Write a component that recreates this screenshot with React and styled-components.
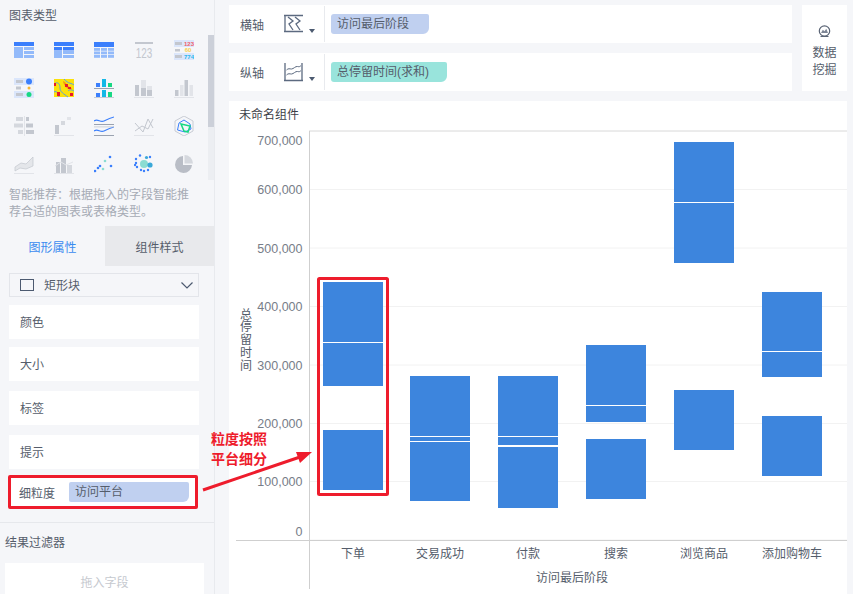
import React from 'react'
import styled, { createGlobalStyle } from 'styled-components'

const GlobalStyle = createGlobalStyle`
  html, body {
    margin: 0;
    padding: 0;
    background: #f5f6f9;
    font-family: "Liberation Sans", "Noto Sans CJK SC", sans-serif;
    font-size: 12px;
    color: #555d6b;
  }
`
const Page = styled.div`
  position: relative;
  width: 853px;
  height: 594px;
  display: flex;
  overflow: hidden;
  background: #f5f6f9;
`
const Sidebar = styled.aside`
  width: 214px;
  flex: none;
  display: flex;
  flex-direction: column;
  border-right: 1px solid #e8eaee;
`
const TypeSection = styled.section`
  position: relative;
  height: 226px;
  flex: none;
  box-sizing: border-box;
  padding: 9px 0 0 9px;
`
const SideTitle = styled.div`
  line-height: 14px;
`
const TypeGrid = styled.div`
  display: grid;
  grid-template-columns: repeat(5, 40px);
  grid-auto-rows: 38px;
  justify-items: center;
  align-items: center;
  margin: 8px 0 0 -5px;
  width: 200px;
`
const Hint = styled.p`
  margin: 4px 0 0;
  width: 190px;
  line-height: 17px;
  color: #a6abb5;
`
const ScrollTrack = styled.div`
  position: absolute;
  top: 35px;
  right: 0;
  width: 6px;
  height: 145px;
  background: #eceef2;
`
const ScrollThumb = styled.div`
  height: 92px;
  background: #ccd0d9;
`
const Tabs = styled.div`
  display: flex;
  height: 40px;
  flex: none;
`
const Tab = styled.div`
  width: ${p => (p.$active ? '105px' : '109px')};
  display: flex;
  align-items: center;
  justify-content: center;
  background: ${p => (p.$active ? '#f5f6f9' : '#e8e9ec')};
  color: ${p => (p.$active ? '#3b8bf0' : '#555d6b')};
`
const PropSection = styled.div`
  padding: 7px 15px 0 9px;
  display: flex;
  flex-direction: column;
`
const Select = styled.div`
  height: 20px;
  border: 1px solid #e3e5ea;
  display: flex;
  align-items: center;
  padding: 0 5px 2px 10px;
  gap: 10px;
  margin-bottom: 8px;
`
const SelectBox = styled.span`
  width: 12px;
  height: 10px;
  border: 1px solid #4c5a70;
  margin-top: 2px;
`
const SelectText = styled.span`
  flex: 1;
`
const PropRow = styled.div`
  height: 34px;
  box-sizing: border-box;
  background: #fff;
  display: flex;
  align-items: center;
  padding: 0 0 2px 11px;
  margin-bottom: ${p => p.$gap}px;
`
const DetailRow = styled.div`
  height: 28px;
  width: 176px;
  margin-left: -1px;
  background: #fff;
  border: 3px solid #ee1c2c;
  border-radius: 2px;
  display: flex;
  align-items: center;
  padding-left: 8px;
  gap: 14px;
`
const DetailPill = styled.div`
  width: 120px;
  height: 20px;
  background: #c0d0f0;
  border-radius: 2px 2px 6px 2px;
  line-height: 20px;
  padding-left: 6px;
  box-sizing: border-box;
`
const FilterSection = styled.div`
  margin-top: 13px;
  border-top: 1px solid #e6e8ec;
  padding: 13px 10px 0 5px;
`
const FilterTitle = styled.div`
  line-height: 14px;
  margin-bottom: 13px;
`
const DropBox = styled.div`
  height: 40px;
  background: #fff;
  text-align: center;
  padding-top: 12px;
  box-sizing: border-box;
  color: #c6c9cf;
  line-height: 16px;
`
const Main = styled.main`
  flex: 1;
  min-width: 0;
  padding: 5px 6px 0 14px;
  display: flex;
  flex-direction: column;
  gap: 10px;
`
const TopBar = styled.div`
  display: flex;
  gap: 10px;
  height: 86px;
  flex: none;
`
const AxisRows = styled.div`
  flex: 1;
  display: flex;
  flex-direction: column;
  gap: 10px;
`
const AxisRow = styled.div`
  height: 38px;
  background: #fff;
  display: flex;
  align-items: center;
  padding-left: 11px;
`
const AxisLabel = styled.span`
  width: 43px;
  flex: none;
`
const Caret = styled.span`
  width: 0;
  height: 0;
  border-left: 3.5px solid transparent;
  border-right: 3.5px solid transparent;
  border-top: 4px solid #4c5a70;
  margin: 13px 0 0 6px;
`
const AxisDivider = styled.span`
  width: 1px;
  height: 36px;
  background: #e8eaee;
  margin: 0 6px 0 9px;
`
const Pill = styled.div`
  width: ${p => p.$width}px;
  height: 20px;
  line-height: 20px;
  padding-left: 6px;
  box-sizing: border-box;
  background: ${p => p.$color};
  border-radius: 3px 2px 6px 3px;
`
const MineButton = styled.div`
  width: 45px;
  flex: none;
  background: #fff;
  display: flex;
  flex-direction: column;
  align-items: center;
  justify-content: center;
  box-sizing: border-box;
  padding-top: 7px;
  line-height: 17px;
  text-align: center;
`
const ChartPanel = styled.section`
  flex: 1;
  min-height: 0;
  background: #fff;
  display: flex;
  flex-direction: column;
`
const ChartTitle = styled.div`
  box-sizing: border-box;
  padding: 7px 10px 0;
  line-height: 14px;
  height: 23px;
  flex: none;
  color: #3c4048;
`
const ChartSvg = styled.svg`
  display: block;
  flex: none;
  font-family: "Liberation Sans", "Noto Sans CJK SC", sans-serif;
  font-size: 12px;
`
const Overlay = styled.svg`
  position: absolute;
  left: 0;
  top: 0;
  pointer-events: none;
`
const Callout = styled.div`
  position: absolute;
  left: 210px;
  top: 429px;
  width: 58px;
  color: #ee1c2c;
  font-weight: 700;
  font-size: 14px;
  line-height: 20px;
  text-align: center;
`

const BLUE = '#3b7ffc'
const SKY = '#93bafa'
const GREY = '#c3c7cf'
const PALE = '#e2e4e9'

const Icon = ({ children }) => (
  <svg width='20' height='20' viewBox='0 0 20 20'>
    {children}
  </svg>
)

const chartIcons = [
  <Icon key='a'>
    <rect y='2' width='20' height='4' fill={BLUE} />
    <rect y='7' width='9' height='11' fill={SKY} />
    <rect x='10' y='7' width='10' height='3' fill={SKY} />
    <rect x='10' y='11' width='10' height='3' fill={SKY} />
    <rect x='10' y='15' width='10' height='3' fill={SKY} />
  </Icon>,
  <Icon key='b'>
    <rect y='2' width='20' height='4' fill={BLUE} />
    <rect y='7' width='8' height='3.5' fill={BLUE} />
    <rect x='9' y='7' width='11' height='3.5' fill={BLUE} />
    <rect y='11' width='8' height='7' fill={SKY} />
    <rect x='9' y='11' width='11' height='3' fill={SKY} />
    <rect x='9' y='15' width='11' height='3' fill={SKY} />
  </Icon>,
  <Icon key='c'>
    <rect y='2' width='20' height='5' fill={BLUE} />
    {[8, 11.5, 15].map(y =>
      [0, 7, 14].map(x => <rect key={`${x}-${y}`} x={x} y={y} width='6' height='2.8' fill={SKY} />)
    )}
  </Icon>,
  // 文字被纵向拉长, 所以这个图标的画布比别的高一点
  <svg key='d' width='20' height='26' viewBox='0 -3 20 26'>
    <rect x='1' y='2' width='18' height='2' fill={GREY} />
    <text transform='translate(10 18) scale(.9 1.35)' textAnchor='middle' fontSize='11' fontFamily='Liberation Sans' fill={GREY}>
      123
    </text>
  </svg>,
  <Icon key='e'>
    <rect x='0' y='0' width='20' height='20' fill='#dbe6fb' />
    <rect x='0' y='7' width='20' height='6' fill='#f5f6f9' />
    <rect x='1' y='2' width='7' height='3' fill={GREY} />
    <rect x='1' y='9' width='5' height='2.5' fill={GREY} />
    <rect x='1' y='15' width='7' height='3' fill={GREY} />
    <text x='15' y='5.5' textAnchor='middle' fontSize='6' fontWeight='700' fontFamily='Liberation Sans' fill='#f0606a'>123</text>
    <text x='14' y='12' textAnchor='middle' fontSize='6' fontWeight='700' fontFamily='Liberation Sans' fill='#f7cf50'>60</text>
    <text x='15' y='18.500' textAnchor='middle' fontSize='6' fontWeight='700' fontFamily='Liberation Sans' fill='#28b6ee'>774</text>
  </Icon>,
  <Icon key='f'>
    <rect y='0' width='20' height='7' fill='#dbe6fb' />
    <rect y='13' width='20' height='7' fill='#dbe6fb' />
    <rect x='2' y='2' width='7' height='3' fill={GREY} />
    <rect x='2' y='8.5' width='5' height='3' fill={GREY} />
    <rect x='2' y='15' width='7' height='3' fill={GREY} />
    <circle cx='15' cy='3.5' r='3' fill={BLUE} />
    <circle cx='15' cy='10' r='1.5' fill='#f7b733' />
    <circle cx='15' cy='16.5' r='2.5' fill='#18d884' />
  </Icon>,
  <Icon key='g'>
    <rect width='20' height='18' y='1' fill='#fbe10b' />
    <path d='M0 6C4 3 6 6 6 10S10 16 14 19M10 1c4 5 8 4 10 6M0 14c3-2 4 2 5 5M14 13c2-2 4-1 6 0' stroke='#5aa0e0' strokeWidth='1' fill='none' />
    <path d='M9 3c3 1 4 4 5 5s3 1 4 3c-2 1-5 0-6-2S9 6 9 3z' fill='#f09a14' />
    <rect x='11' y='6' width='3' height='3' fill='#e8182c' />
    <rect x='14' y='9' width='3' height='2' fill='#e8182c' />
    <rect x='0' y='5' width='2' height='3' fill='#e8182c' />
    <rect x='3' y='14' width='3' height='4' fill='#e8182c' />
    <rect x='16' y='15' width='3' height='3' fill='#e8182c' />
  </Icon>,
  <Icon key='h'>
    <rect x='2' y='5' width='4' height='4' fill={BLUE} />
    <rect x='8' y='1' width='4' height='8' fill='#14b8e6' />
    <rect x='14' y='5' width='4' height='4' fill='#18d884' />
    <rect x='0' y='10' width='20' height='1' fill='#9aa2b0' />
    <rect x='2' y='15' width='4' height='4' fill={BLUE} />
    <rect x='8' y='12' width='4' height='7' fill='#14b8e6' />
    <rect x='14' y='14' width='4' height='5' fill='#18d884' />
    <rect x='0' y='19.500' width='20' height='1' fill='#9aa2b0' />
  </Icon>,
  <Icon key='i'>
    <rect x='1' y='7' width='4' height='11' fill={GREY} />
    <rect x='7' y='2' width='5' height='8' fill={PALE} />
    <rect x='7' y='10' width='5' height='8' fill={GREY} />
    <rect x='13' y='8' width='5' height='4' fill={PALE} />
    <rect x='13' y='12' width='5' height='6' fill={GREY} />
    <rect x='0' y='19' width='20' height='1' fill={PALE} />
  </Icon>,
  <Icon key='j'>
    <rect x='1' y='12' width='3.5' height='6' fill={GREY} />
    <rect x='6' y='7' width='3.5' height='11' fill={PALE} />
    <rect x='10.500' y='2' width='3.5' height='16' fill={GREY} />
    <rect x='15.5' y='7' width='3.5' height='11' fill={PALE} />
    <rect x='0' y='19' width='20' height='1' fill={PALE} />
  </Icon>,
  <Icon key='k'>
    <rect x='2' y='1' width='7' height='4' fill='#d5d8de' />
    <rect x='12' y='1' width='3' height='4' fill={GREY} />
    <rect x='0' y='7.5' width='9' height='4' fill='#d5d8de' />
    <rect x='12' y='7.5' width='7' height='4' fill={GREY} />
    <rect x='4' y='14' width='5' height='4' fill='#d5d8de' />
    <rect x='12' y='14' width='8' height='4' fill={GREY} />
    <rect x='10' y='0' width='1' height='20' fill={PALE} />
  </Icon>,
  <Icon key='l'>
    <rect x='1' y='9' width='4' height='9' fill={GREY} />
    <rect x='7' y='5' width='4' height='4' fill='#d5d8de' />
    <rect x='13' y='1' width='4' height='3' fill={PALE} />
    <rect x='0' y='19' width='20' height='1' fill={PALE} />
  </Icon>,
  <Icon key='m'>
    <path d='M0 5c4-3 6 2 10 0s6-3 10-4M0 15c4-3 6 2 10 0s6-3 10-4' stroke={BLUE} strokeWidth='1.2' fill='none' />
    <rect y='8' width='20' height='1' fill='#9aa2b0' />
    <rect y='10.5' width='20' height='0.8' fill='#c3c7cf' />
    <rect y='19' width='20' height='1' fill='#9aa2b0' />
  </Icon>,
  <Icon key='n'>
    <path d='M1 7l8 9 5-13 5 9' stroke={GREY} strokeWidth='1' fill='none' />
    <path d='M1 15l7-5 6 3 5-10' stroke={GREY} strokeWidth='1' fill='none' />
    <rect y='19' width='20' height='1' fill={PALE} />
  </Icon>,
  <Icon key='o'>
    <path d='M10 0l9 5v10l-9 5-9-5V5z' stroke='#c8ccd4' strokeWidth='1' fill='none' />
    <path d='M3.5 14L5 7l5-3 6 4 1 5-6 3z' stroke={BLUE} strokeWidth='1' fill='none' />
    <path d='M7 8l9 2-2 6-4-1z' stroke='#18d884' strokeWidth='1.5' fill='none' />
  </Icon>,
  <Icon key='p'>
    <path d='M1 13l6-4 5 1 7-7v9l-7 3-6-1-5 3z' fill='#e4e6ea' stroke={GREY} strokeWidth='.7' />
    <rect y='19' width='20' height='1' fill={PALE} />
  </Icon>,
  <Icon key='q'>
    <rect x='2' y='8' width='4' height='11' fill={GREY} />
    <rect x='7' y='4' width='5' height='15' fill={GREY} />
    <rect x='13' y='11' width='5' height='8' fill='#d5d8de' />
    <path d='M1 12l6-4 5 3 7-3' stroke={PALE} fill='none' />
    <rect y='19' width='20' height='1' fill={PALE} />
  </Icon>,
  <Icon key='r'>
    {[[1, 17, BLUE], [6, 12, BLUE], [9, 15, '#8bdcd2'], [11, 7, '#8bdcd2'], [16, 3, BLUE], [17, 12, BLUE], [4, 14, BLUE]].map(([x, y, c]) => (
      <circle key={`${x}-${y}`} cx={x} cy={y} r='1.3' fill={c} />
    ))}
  </Icon>,
  <Icon key='s'>
    <circle cx='10' cy='10' r='4' fill='#8bdcd2' />
    <circle cx='16' cy='11' r='2.6' fill='#3aa8d8' />
    <circle cx='12.5' cy='3.5' r='1.6' fill='#3aa8d8' />
    {[[6, 1.5], [2, 5], [1, 11], [3, 13], [7, 16], [10, 17], [14, 16], [2, 9], [16, 3]].map(([x, y]) => (
      <circle key={`${x}-${y}`} cx={x} cy={y} r='1.2' fill={BLUE} />
    ))}
  </Icon>,
  <Icon key='t'>
    <path d='M9 2a8.500 8.500 0 1 0 9 9h-9z' fill='#b9bdc6' />
    <path d='M10.500 1a8.500 8.500 0 0 1 8.500 8.500h-8.500z' fill='#d5d8de' />
  </Icon>,
]

const RoadIcon = () => (
  <svg width='20' height='20' viewBox='0 0 20 20' fill='none' stroke='#5c6a80' strokeWidth='1.3'>
    <path d='M2 1v17M1 1.500h19M1 17.500h19' />
    <path d='M5 3l5 4-4 3 4 6M12 3l5 4-4 3 4 6' />
  </svg>
)

const LineIcon = () => (
  <svg width='20' height='20' viewBox='0 0 20 20' fill='none' stroke='#5c6a80' strokeWidth='1.3'>
    <path d='M2 1v17.500M1 18.500h19M19 1v17.500' />
    <path d='M3.500 8c2-2 3-1 5-1s4-3 6-2.500 2.500 0 3.500-1M3.500 13c2-2 3-1 5-1s4-3 6-2.500 2.500 0 3.500-1' strokeWidth='1' />
  </svg>
)

const MineIcon = () => (
  <svg width='13' height='13' viewBox='0 0 13 13' style={{ marginBottom: 7 }}>
    <circle cx='6.500' cy='6' r='5.200' fill='#fff' stroke='#5a6475' strokeWidth='1.200' />
    <path d='M3 8l1.800-3.200 1.700 1.400 1.800-2.400L10 8z' fill='#7e8696' />
    <path d='M2.500 11.500h8' stroke='#5a6475' />
  </svg>
)

// 图表坐标用整页坐标, 面板内容从 (229, 124) 开始
const OX = 229
const OY = 124
const ticks = [
  { label: '700,000', y: 131, ty: 140 },
  { label: '600,000', y: 189.500, ty: 189 },
  { label: '500,000', y: 248, ty: 248 },
  { label: '400,000', y: 306.500, ty: 306 },
  { label: '300,000', y: 365, ty: 365 },
  { label: '200,000', y: 423.500, ty: 423 },
  { label: '100,000', y: 481.500, ty: 481 },
  { label: '0', y: 540, ty: 531 },
]
const columns = [
  { name: '下单', x: 323, blocks: [[282, 386], [430, 490]], lines: [342] },
  { name: '交易成功', x: 410, blocks: [[376, 501]], lines: [436, 441] },
  { name: '付款', x: 498, blocks: [[376, 508]], lines: [436, 445] },
  { name: '搜索', x: 586, blocks: [[345, 422], [439, 499]], lines: [405] },
  { name: '浏览商品', x: 674, blocks: [[142, 263], [390, 450]], lines: [202] },
  { name: '添加购物车', x: 762, blocks: [[292, 377], [416, 476]], lines: [351] },
]

function BlockChart() {
  return (
    <ChartSvg width='618' height='470' viewBox={`${OX} ${OY} 618 470`}>
      {ticks.map(t => (
        <g key={t.label}>
          <line x1='309' x2='847' y1={t.y} y2={t.y} stroke={t.y === 131 ? '#d8d8d8' : '#f2f2f2'} />
          <text x='302.500' y={t.ty + 4.500} textAnchor='end' fontSize='12.500' fill='#777d88'>
            {t.label}
          </text>
        </g>
      ))}
      <line x1='309.500' x2='309.500' y1='131' y2='589' stroke='#cfcfcf' />
      <line x1='236' x2='847' y1='540.500' y2='540.500' stroke='#cfcfcf' />
      {columns.map(c => (
        <g key={c.name}>
          {c.blocks.map(([a, b]) => (
            <rect key={a} x={c.x} y={a} width='60' height={b - a} fill='#3d85dd' />
          ))}
          {c.lines.map(y => (
            <rect key={y} x={c.x} y={y} width='60' height={y === 445 ? 2 : 1} fill='#fff' />
          ))}
          <text x={c.x + 30} y='558' textAnchor='middle' fill='#555d6b'>
            {c.name}
          </text>
        </g>
      ))}
      {'总停留时间'.split('').map((ch, i) => (
        <text key={ch} x='246' y={318.500 + i * 12.800} textAnchor='middle' fill='#555d6b'>
          {ch}
        </text>
      ))}
      <text x='572' y='582' textAnchor='middle' fill='#555d6b'>
        访问最后阶段
      </text>
    </ChartSvg>
  )
}

export default function App() {
  return (
    <Page>
      <GlobalStyle />
      <Sidebar>
        <TypeSection>
          <SideTitle>图表类型</SideTitle>
          <TypeGrid>{chartIcons}</TypeGrid>
          <Hint>智能推荐：根据拖入的字段智能推荐合适的图表或表格类型。</Hint>
          <ScrollTrack>
            <ScrollThumb />
          </ScrollTrack>
        </TypeSection>
        <Tabs>
          <Tab $active>图形属性</Tab>
          <Tab>组件样式</Tab>
        </Tabs>
        <PropSection>
          <Select>
            <SelectBox />
            <SelectText>矩形块</SelectText>
            <svg width='12' height='7' viewBox='0 0 12 7' fill='none' stroke='#4c5a70' strokeWidth='1.2' style={{ marginTop: 2 }}>
              <path d='M.5.5L6 6 11.500.5' />
            </svg>
          </Select>
          <PropRow $gap={8}>颜色</PropRow>
          <PropRow $gap={10}>大小</PropRow>
          <PropRow $gap={10}>标签</PropRow>
          <PropRow $gap={6}>提示</PropRow>
          <DetailRow>
            细粒度
            <DetailPill>访问平台</DetailPill>
          </DetailRow>
        </PropSection>
        <FilterSection>
          <FilterTitle>结果过滤器</FilterTitle>
          <DropBox>拖入字段</DropBox>
        </FilterSection>
      </Sidebar>
      <Main>
        <TopBar>
          <AxisRows>
            <AxisRow>
              <AxisLabel>横轴</AxisLabel>
              <RoadIcon />
              <Caret />
              <AxisDivider />
              <Pill $width={98} $color='#c0d0f0'>
                访问最后阶段
              </Pill>
            </AxisRow>
            <AxisRow>
              <AxisLabel>纵轴</AxisLabel>
              <LineIcon />
              <Caret />
              <AxisDivider />
              <Pill $width={116} $color='#99e4dc'>
                总停留时间(求和)
              </Pill>
            </AxisRow>
          </AxisRows>
          <MineButton>
            <MineIcon />
            数据
            <br />
            挖掘
          </MineButton>
        </TopBar>
        <ChartPanel>
          <ChartTitle>未命名组件</ChartTitle>
          <BlockChart />
        </ChartPanel>
      </Main>
      <Overlay width='853' height='594'>
        <rect x='318.500' y='278.500' width='69' height='216' fill='none' stroke='#ee1c2c' strokeWidth='3' rx='1' />
        <path d='M203 490L300 457' stroke='#ee1c2c' strokeWidth='3' />
        <path d='M312 452L296 452L300 463z' fill='#ee1c2c' />
      </Overlay>
      <Callout>
        粒度按照
        <br />
        平台细分
      </Callout>
    </Page>
  )
}
